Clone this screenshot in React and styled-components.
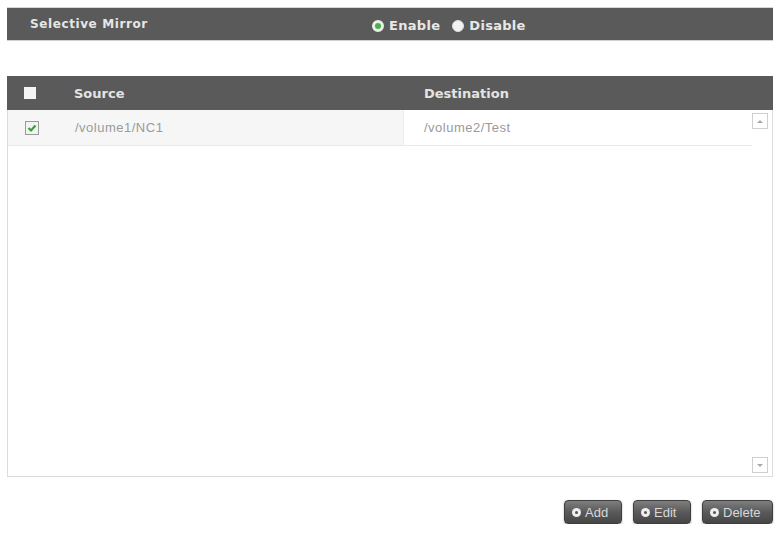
import React from "react";
import styled, { createGlobalStyle } from "styled-components";

const GlobalStyle = createGlobalStyle`
  body {
    margin: 0;
    background: #fff;
    font-family: "DejaVu Sans", Verdana, sans-serif;
  }
`;

const Page = styled.div`
  padding: 7px 6px 0 7px;
  width: 766px;
`;

const TitleBar = styled.div`
  display: flex;
  align-items: center;
  height: 34px;
  background: #5a5a5a;
  border-top: 1px solid #d6d6d6;
  border-bottom: 1px solid #cfcfcf;
  box-sizing: border-box;
  color: #e6e6e6;
`;

const Title = styled.div`
  width: 342px;
  padding-left: 23px;
  font-size: 12px;
  font-weight: bold;
  letter-spacing: 0.6px;
  margin-top: -1px;
`;

const RadioGroup = styled.div`
  display: flex;
  align-items: center;
  gap: 12px;
  margin-top: 3px;
`;

const RadioLabel = styled.label`
  display: flex;
  align-items: center;
  gap: 5px;
  font-size: 13px;
  font-weight: bold;
  letter-spacing: 0.3px;
  color: #e8e8e8;
`;

const RadioDot = styled.span`
  width: 12px;
  height: 12px;
  border-radius: 50%;
  box-sizing: border-box;
  background: ${(p) => (p.$checked ? "#4cae4c" : "#f2f2f2")};
  border: ${(p) => (p.$checked ? "3px solid #e8f3e8" : "1px solid #ddd")};
`;

const Table = styled.div`
  margin-top: 35px;
  display: flex;
  flex-direction: column;
  height: 401px;
`;

const HeadRow = styled.div`
  display: flex;
  align-items: center;
  height: 34px;
  background: #5a5a5a;
  color: #e4e4e4;
  font-size: 13px;
  font-weight: bold;
  flex-shrink: 0;
`;

const HeadCheck = styled.span`
  width: 12px;
  height: 12px;
  background: #f4f4f4;
  margin: 0 38px 0 17px;
`;

const HeadCell = styled.div`
  width: ${(p) => p.$width}px;
`;

const Body = styled.div`
  flex: 1;
  display: flex;
  border: 1px solid #dcdcdc;
  border-top: none;
`;

const Rows = styled.div`
  flex: 1;
`;

const Row = styled.div`
  display: flex;
  height: 35px;
  border-bottom: 1px solid #e8e8e8;
  font-family: "Liberation Sans", Arial, sans-serif;
  font-size: 13px;
  letter-spacing: 0.5px;
  color: #9a9a9a;
`;

const RowLead = styled.div`
  display: flex;
  align-items: center;
  width: 395px;
  background: #f6f6f6;
`;

const RowCheck = styled.span`
  width: 14px;
  height: 14px;
  margin: 0 36px 0 17px;
  border: 1px solid #9a9a9a;
  background: #eef5ee;
  box-sizing: border-box;
  display: flex;
  align-items: center;
  justify-content: center;
`;

const RowDest = styled.div`
  flex: 1;
  display: flex;
  align-items: center;
  padding-left: 20px;
  background: #fff;
  border-left: 1px solid #ececec;
`;

const ScrollBar = styled.div`
  width: 16px;
  margin: 3px 4px 3px 0;
  display: flex;
  flex-direction: column;
  justify-content: space-between;
`;

const ScrollArrow = styled.div`
  width: 16px;
  height: 16px;
  box-sizing: border-box;
  border: 1px solid #cfcfcf;
  background: #fff;
  display: flex;
  align-items: center;
  justify-content: center;

  &::after {
    content: "";
    border-left: 3px solid transparent;
    border-right: 3px solid transparent;
    ${(p) => (p.$up ? "border-bottom: 3px solid #aaa;" : "border-top: 3px solid #aaa;")}
  }
`;

const Actions = styled.div`
  display: flex;
  justify-content: flex-end;
  gap: 11px;
  margin-top: 23px;
`;

const Button = styled.button`
  display: flex;
  align-items: center;
  gap: 4px;
  height: 24px;
  width: ${(p) => p.$width}px;
  padding: 0 0 0 7px;
  border: 1px solid #3e3e3e;
  border-radius: 4px;
  background: linear-gradient(#7e7e7e, #5a5a5a 50%, #464646);
  box-shadow: 0 1px 2px rgba(0, 0, 0, 0.35);
  color: #d8d8d8;
  font-family: "Liberation Sans", Arial, sans-serif;
  font-size: 13px;
`;

const ButtonIcon = styled.span`
  width: 9px;
  height: 9px;
  border-radius: 50%;
  background: #eee;
  display: flex;
  align-items: center;
  justify-content: center;

  &::after {
    content: "";
    width: 3px;
    height: 3px;
    border-radius: 50%;
    background: #555;
  }
`;

const mirrors = [{ source: "/volume1/NC1", destination: "/volume2/Test" }];

export default function App() {
  return (
    <Page>
      <GlobalStyle />
      <TitleBar>
        <Title>Selective Mirror</Title>
        <RadioGroup>
          <RadioLabel>
            <RadioDot $checked />
            Enable
          </RadioLabel>
          <RadioLabel>
            <RadioDot />
            Disable
          </RadioLabel>
        </RadioGroup>
      </TitleBar>

      <Table>
        <HeadRow>
          <HeadCheck />
          <HeadCell $width={350}>Source</HeadCell>
          <HeadCell>Destination</HeadCell>
        </HeadRow>
        <Body>
          <Rows>
            {mirrors.map((m) => (
              <Row key={m.source}>
                <RowLead>
                  <RowCheck>
                    <svg width="10" height="10" viewBox="0 0 10 10">
                      <path d="M1.5 5 L4 7.5 L8.5 2.5" fill="none" stroke="#3aa03a" strokeWidth="2.2" />
                    </svg>
                  </RowCheck>
                  {m.source}
                </RowLead>
                <RowDest>{m.destination}</RowDest>
              </Row>
            ))}
          </Rows>
          <ScrollBar>
            <ScrollArrow $up />
            <ScrollArrow />
          </ScrollBar>
        </Body>
      </Table>

      <Actions>
        <Button $width={58}>
          <ButtonIcon />
          Add
        </Button>
        <Button $width={58}>
          <ButtonIcon />
          Edit
        </Button>
        <Button $width={71}>
          <ButtonIcon />
          Delete
        </Button>
      </Actions>
    </Page>
  );
}
